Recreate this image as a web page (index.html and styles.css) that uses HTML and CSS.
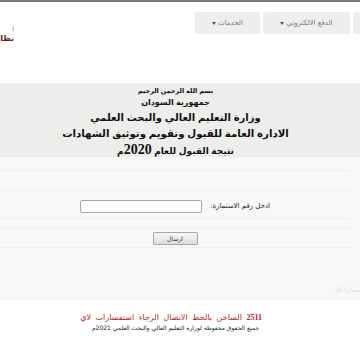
FILE: index.html
```html
<!DOCTYPE html>
<html lang="ar" dir="rtl">

<head>
    <meta charset="UTF-8">
    <meta name="viewport" content="width=device-width, initial-scale=1.0">
    <title>نتيجة القبول</title>
    <link rel="stylesheet" href="styles.css">
</head>

<body>
    <div class="top-bar">
        <ul class="nav-menu">
            <li class="nav-item nav-wide">الرئيسية</li>
            <li class="nav-item nav-pay">الدفع الالكتروني <span class="caret"></span></li>
            <li class="nav-item nav-services">الخدمات <span class="caret"></span></li>
        </ul>
        <div class="brand">
            <div class="brand-small">ا</div>
            <div class="brand-title">نظام القبول</div>
        </div>
    </div>

    <div class="banner">
        <div class="line-basmala">بسم الله الرحمن الرحيم</div>
        <div class="line-country">جمهورية السودان</div>
        <div class="line-ministry">وزارة التعليم العالي والبحث العلمي</div>
        <div class="line-dept">الادارة العامة للقبول وتقويم وتوثيق الشهادات</div>
        <div class="line-result">نتيجة القبول للعام <span class="year">2020</span>م</div>
    </div>

    <div class="content">
        <table class="form-table">
            <tr class="row-a"><td></td></tr>
            <tr class="row-b"><td></td></tr>
            <tr class="row-input">
                <td>
                    <label class="form-label" for="formNo">ادخل رقم الاستمارة:</label>
                    <input type="text" id="formNo" class="form-input">
                </td>
            </tr>
            <tr class="row-c"><td></td></tr>
            <tr class="row-button">
                <td><button type="button" class="send-button">ارسال</button></td>
            </tr>
        </table>
        <div class="faded-note">شكرا لك</div>
    </div>

    <div class="footer">
        <div class="hotline"><span>لاي</span> <span>استفسارات</span> <span>الرجاء</span> <span>الاتصال</span> <span>بالخط</span> <span>الساخن</span> <span class="hotline-no">2511</span></div>
        <div class="copyright">جميع الحقوق محفوظة لوزارة التعليم العالي والبحث العلمي 2021م</div>
    </div>
</body>

</html>
```

FILE: styles.css
```css
* {
    margin: 0;
    padding: 0;
    box-sizing: border-box;
}

html,
body {
    overflow: hidden;
}

body {
    font-family: 'DejaVu Sans', 'Liberation Sans', sans-serif;
    background: #ffffff;
    border-top: 2px solid #7a7a7a;
    direction: rtl;
    color: #222;
}

.top-bar {
    height: 81px;
    display: flex;
    justify-content: space-between;
    align-items: flex-start;
}

.nav-menu {
    list-style: none;
    display: flex;
    gap: 3px;
    margin-top: 10px;
    margin-right: -73px;
}

.nav-item {
    height: 22px;
    background: #eeeeee;
    color: #777;
    font-size: 7px;
    display: flex;
    align-items: center;
    justify-content: center;
    gap: 2px;
    border-radius: 2px;
}

.nav-wide {
    width: 80px;
}

.nav-pay {
    width: 87px;
}

.nav-services {
    width: 65px;
}

.caret {
    width: 0;
    height: 0;
    border-left: 2px solid transparent;
    border-right: 2px solid transparent;
    border-top: 3px solid #555;
}

.brand {
    width: 14px;
    white-space: nowrap;
    margin-top: 22px;
}

.brand-small {
    font-size: 6px;
    color: #666;
    line-height: 9px;
}

.brand-title {
    font-size: 8px;
    font-weight: bold;
    color: #6b1c1c;
    line-height: 11px;
}

.banner {
    height: 74px;
    background: #ededeb;
    text-align: center;
    color: #111;
    padding-top: 2px;
    padding-right: 9px;
    font-family: 'Liberation Sans', 'DejaVu Sans', sans-serif;
    font-weight: bold;
}

.line-basmala {
    font-size: 6.5px;
    line-height: 11px;
}

.line-country {
    font-size: 8px;
    line-height: 14px;
}

.line-ministry {
    font-size: 10px;
    line-height: 15px;
}

.line-dept {
    font-size: 10.2px;
    line-height: 17px;
}

.line-result {
    font-size: 9px;
    line-height: 15px;
}

.year {
    font-family: 'Liberation Serif', serif;
    font-size: 14px;
}

.content {
    height: 143px;
    background: #f8f8f8;
    padding-right: 10px;
    position: relative;
}

.form-table {
    width: 100%;
    border-collapse: collapse;
}

.form-table td {
    border-bottom: 1px solid #eeeeee;
    text-align: center;
    padding: 0;
}

.row-a td {
    height: 13px;
}

.row-b td {
    height: 20px;
}

.row-input td {
    height: 28px;
    padding-top: 2px;
}

.row-c td {
    height: 9px;
}

.row-button td {
    height: 17px;
}

.form-label {
    font-size: 7px;
    color: #222;
    vertical-align: middle;
    margin-left: 3px;
}

.form-input {
    width: 122px;
    height: 13px;
    border: 1px solid #a8a8a8;
    border-radius: 2px;
    background: #fff;
    vertical-align: middle;
}

.send-button {
    width: 45px;
    height: 13px;
    font-family: 'DejaVu Sans', sans-serif;
    font-size: 6px;
    color: #333;
    border: 1px solid #a5a5a5;
    border-radius: 2px;
    background: linear-gradient(#f6f6f6, #dddddd);
    vertical-align: middle;
}

.faded-note {
    position: absolute;
    right: 0;
    bottom: 6px;
    font-size: 7px;
    color: #dcdcdc;
}

.footer {
    padding-top: 13px;
    padding-right: 9px;
}

.hotline {
    direction: ltr;
    text-align: right;
    margin-right: 89px;
    margin-left: -200px;
    white-space: nowrap;
    font-size: 8px;
    word-spacing: 2px;
    color: #c41a1a;
    line-height: 10px;
}

.hotline span {
    display: inline-block;
}

.hotline-no {
    font-family: 'Liberation Serif', serif;
    font-weight: bold;
}

.copyright {
    font-size: 6px;
    color: #222;
    text-align: center;
    line-height: 10px;
}
```
